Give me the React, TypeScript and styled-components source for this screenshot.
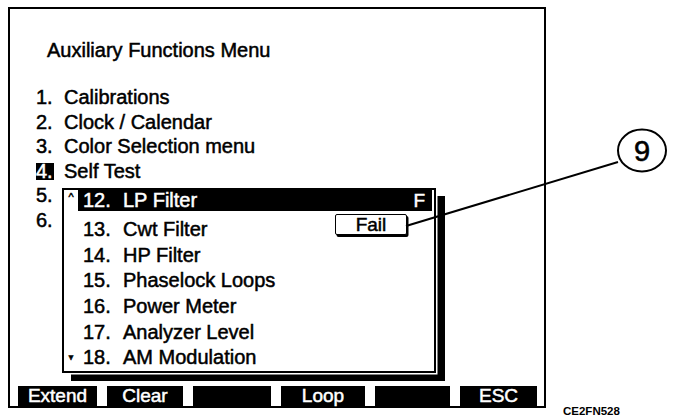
import styled, { createGlobalStyle } from 'styled-components';

const GlobalStyle = createGlobalStyle`
  html, body {
    margin: 0;
    padding: 0;
    background: #fff;
  }
  body {
    font-family: 'Liberation Sans', Arial, sans-serif;
    color: #000;
    -webkit-text-stroke: 0.5px;
  }
`;

const Page = styled.div`
  position: relative;
  display: flex;
  width: 673px;
  height: 419px;
  padding: 7px 0 0 8px;
  box-sizing: border-box;
`;

const Screen = styled.div`
  position: relative;
  display: flex;
  flex-direction: column;
  width: 538px;
  height: 401px;
  border: 2px solid #000;
  box-sizing: border-box;
`;

const Title = styled.div`
  margin: 28.7px 0 0 37px;
  font-size: 20px;
  line-height: 24.6px;
`;

const MenuList = styled.div`
  margin-top: 23.4px;
  padding-left: 26px;
  display: flex;
  flex-direction: column;
`;

const MenuRow = styled.div`
  display: flex;
  align-items: center;
  height: 24.5px;
  font-size: 20px;
`;

const Num = styled.span<{ $selected?: boolean }>`
  width: 28px;
  display: flex;
  span {
    display: inline-block;
    height: 17px;
    line-height: 17px;
    padding: 0 1px 0 0;
    background: ${(p) => (p.$selected ? '#000' : 'transparent')};
    color: ${(p) => (p.$selected ? '#fff' : '#000')};
  }
`;

const Popup = styled.div`
  position: absolute;
  left: 52px;
  top: 179px;
  width: 374px;
  border: 2px solid #000;
  box-sizing: border-box;
  background: #fff;
  box-shadow: 0 0 0 1.5px #fff, 9px 8px 0 #000;
`;

const PopRow = styled.div<{ $active?: boolean }>`
  display: flex;
  height: ${(p) => (p.$active ? '21px' : '25.6px')};
  margin-bottom: ${(p) => (p.$active ? '6px' : '0')};
  font-size: 20px;
`;

const Marker = styled.div<{ $up?: boolean }>`
  width: 14px;
  display: flex;
  justify-content: center;
  align-items: ${(p) => (p.$up ? 'flex-start' : 'center')};
  padding-top: ${(p) => (p.$up ? '2px' : '0')};
  font-size: ${(p) => (p.$up ? '11px' : '8px')};
  line-height: 1;
`;

const PopBody = styled.div<{ $active?: boolean }>`
  flex: 1;
  display: flex;
  align-items: center;
  margin-right: 2px;
  padding: 0 7px 0 5px;
  background: ${(p) => (p.$active ? '#000' : 'transparent')};
  color: ${(p) => (p.$active ? '#fff' : '#000')};
`;

const PopNum = styled.span`
  width: 40px;
`;

const PopLabel = styled.span`
  flex: 1;
`;

const Flag = styled.span`
  font-size: 19px;
`;

const FailBox = styled.div`
  position: absolute;
  left: 271px;
  top: 24px;
  width: 72px;
  height: 21px;
  border: 1.5px solid #000;
  border-radius: 2px;
  box-sizing: border-box;
  background: #fff;
  box-shadow: 1.5px 2px 0 #000;
  display: flex;
  align-items: center;
  justify-content: center;
  font-size: 19px;
  line-height: 18px;
`;

const SoftKeys = styled.div`
  margin-top: auto;
  display: grid;
  grid-template-columns: 79px 76px 78px 84px 75px 77px;
  column-gap: 10px;
  padding-left: 8px;
`;

const SoftKey = styled.div`
  height: 20px;
  line-height: 20px;
  background: #000;
  color: #fff;
  font-size: 19px;
  text-align: center;
`;

const FigLabel = styled.div`
  align-self: flex-end;
  margin: 0 0 1px 17px;
  font-size: 11.5px;
  font-weight: bold;
  line-height: 14px;
  -webkit-text-stroke: 0;
`;

const Callout = styled.svg`
  position: absolute;
  left: 0;
  top: 0;
  pointer-events: none;
`;

const mainItems = [
  { n: '1.', label: 'Calibrations' },
  { n: '2.', label: 'Clock / Calendar' },
  { n: '3.', label: 'Color Selection menu' },
  { n: '4.', label: 'Self Test', selected: true },
  { n: '5.', label: '' },
  { n: '6.', label: '' },
];

const tests = [
  '12.|LP Filter',
  '13.|Cwt Filter',
  '14.|HP Filter',
  '15.|Phaselock Loops',
  '16.|Power Meter',
  '17.|Analyzer Level',
  '18.|AM Modulation',
];

const keys = ['Extend', 'Clear', '', 'Loop', '', 'ESC'];

export default function App() {
  return (
    <>
      <GlobalStyle />
      <Page>
        <Screen>
          <Title>Auxiliary Functions Menu</Title>
          <MenuList>
            {mainItems.map((it) => (
              <MenuRow key={it.n}>
                <Num $selected={it.selected}>
                  <span>{it.n}</span>
                </Num>
                {it.label}
              </MenuRow>
            ))}
          </MenuList>

          <Popup>
            {tests.map((t, i) => {
              const [n, label] = t.split('|');
              const first = i === 0;
              const last = i === tests.length - 1;
              return (
                <PopRow key={n} $active={first}>
                  <Marker $up={first}>{first ? '^' : last ? '▼' : ''}</Marker>
                  <PopBody $active={first}>
                    <PopNum>{n}</PopNum>
                    <PopLabel>{label}</PopLabel>
                    {first && <Flag>F</Flag>}
                  </PopBody>
                </PopRow>
              );
            })}
            <FailBox>Fail</FailBox>
          </Popup>

          <SoftKeys>
            {keys.map((k, i) => (
              <SoftKey key={i}>{k}</SoftKey>
            ))}
          </SoftKeys>
        </Screen>
        <FigLabel>CE2FN528</FigLabel>

        <Callout width="673" height="419" viewBox="0 0 673 419">
          <line x1="406" y1="226" x2="618" y2="162" stroke="#000" strokeWidth="2" />
          <ellipse cx="642" cy="150.5" rx="24" ry="21" fill="#fff" stroke="#000" strokeWidth="2" />
          <text
            x="642"
            y="161"
            textAnchor="middle"
            fontFamily="'Liberation Sans', Arial, sans-serif"
            fontSize="29"
            stroke="#000"
            strokeWidth="0.6"
          >
            9
          </text>
        </Callout>
      </Page>
    </>
  );
}
